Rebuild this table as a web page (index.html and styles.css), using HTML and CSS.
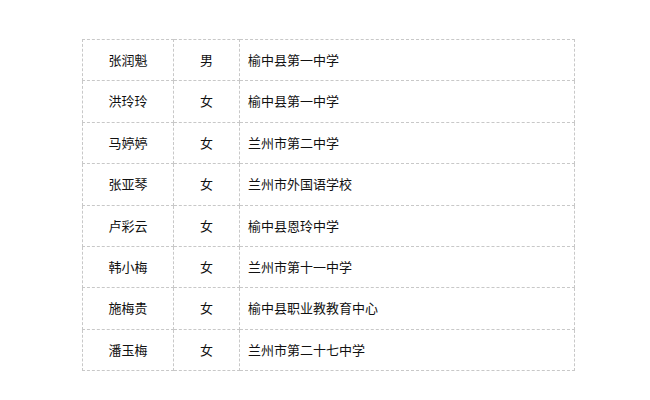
FILE: index.html
```html
<!DOCTYPE html>
<html lang="zh">
<head>
<meta charset="utf-8">
<link rel="stylesheet" href="styles.css">
</head>
<body>
<table class="roster">
  <tr><td class="name">张润魁</td><td class="sex">男</td><td class="school">榆中县第一中学</td></tr>
  <tr><td class="name">洪玲玲</td><td class="sex">女</td><td class="school">榆中县第一中学</td></tr>
  <tr><td class="name">马婷婷</td><td class="sex">女</td><td class="school">兰州市第二中学</td></tr>
  <tr><td class="name">张亚琴</td><td class="sex">女</td><td class="school">兰州市外国语学校</td></tr>
  <tr><td class="name">卢彩云</td><td class="sex">女</td><td class="school">榆中县恩玲中学</td></tr>
  <tr><td class="name">韩小梅</td><td class="sex">女</td><td class="school">兰州市第十一中学</td></tr>
  <tr><td class="name">施梅贵</td><td class="sex">女</td><td class="school">榆中县职业教教育中心</td></tr>
  <tr><td class="name">潘玉梅</td><td class="sex">女</td><td class="school">兰州市第二十七中学</td></tr>
</table>
</body>
</html>
```
FILE: styles.css
```css
html, body {
  margin: 0;
  padding: 0;
  background: #fff;
}
body {
  padding: 39px 0 0 82px;
  font-family: "Noto Sans CJK SC", "Microsoft YaHei", sans-serif;
  font-size: 13px;
  color: #111;
}
.roster {
  border-collapse: collapse;
  width: 493px;
  table-layout: fixed;
}
.roster td {
  border: 1px dashed #c8c8c8;
  padding: 11px 8px;
  line-height: 18.4px;
  height: 18.4px;
  white-space: nowrap;
}
.roster .name {
  width: 74px;
  text-align: center;
}
.roster .sex {
  width: 49px;
  text-align: center;
}
.roster .school {
  text-align: left;
}
```
